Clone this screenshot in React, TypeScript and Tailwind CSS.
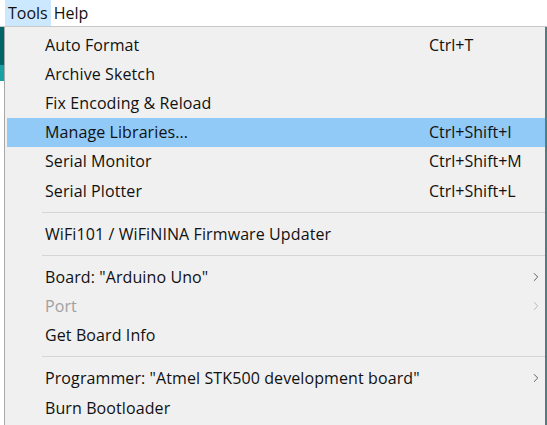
import { ChevronRight } from 'lucide-react'

type Item = { label: string; shortcut?: string; sub?: boolean; disabled?: boolean; active?: boolean }

const groups: Item[][] = [
  [
    { label: 'Auto Format', shortcut: 'Ctrl+T' },
    { label: 'Archive Sketch' },
    { label: 'Fix Encoding & Reload' },
    { label: 'Manage Libraries...', shortcut: 'Ctrl+Shift+I', active: true },
    { label: 'Serial Monitor', shortcut: 'Ctrl+Shift+M' },
    { label: 'Serial Plotter', shortcut: 'Ctrl+Shift+L' },
  ],
  [{ label: 'WiFi101 / WiFiNINA Firmware Updater' }],
  [
    { label: 'Board: "Arduino Uno"', sub: true },
    { label: 'Port', sub: true, disabled: true },
    { label: 'Get Board Info' },
  ],
  [
    { label: 'Programmer: "Atmel STK500 development board"', sub: true },
    { label: 'Burn Bootloader' },
  ],
]

function Row({ item }: { item: Item }) {
  return (
    <div
      className={`flex items-center h-[29.2px] pl-[38px] pr-[2px] ${item.active ? 'bg-[#91c9f7]' : ''} ${item.disabled ? 'text-[#a0a0a0]' : 'text-[#111]'}`}
    >
      <span className="flex-1 whitespace-nowrap tracking-[0.1px]">{item.label}</span>
      {item.shortcut && <span className="w-[114px] whitespace-nowrap">{item.shortcut}</span>}
      {item.sub && (
        <ChevronRight size={14} strokeWidth={1.6} className={item.disabled ? 'text-[#b5b5b5]' : 'text-[#555]'} />
      )}
    </div>
  )
}

export default function App() {
  return (
    <div className="w-[547px] h-[425px] bg-white overflow-hidden relative text-[16px]" style={{ fontFamily: '"Open Sans", "Noto Sans", sans-serif' }}>
      {/* Menu bar */}
      <div className="flex h-[27px] border-b border-[#c9c9c9] items-stretch pl-[5px]">
        <div className="bg-[#cce8ff] px-[3px] flex items-center text-[#111]">Tools</div>
        <div className="px-[3px] flex items-center text-[#111]">Help</div>
      </div>

      <div className="flex h-[398px]">
        {/* editor sliver behind the menu */}
        <div className="w-[4px] flex flex-col">
          <div className="h-[38px] bg-[#006468]" />
          <div className="h-[16px] bg-[#17a1a5]" />
          <div className="flex-1 bg-white" />
        </div>

        {/* dropdown */}
        <div className="w-[541px] bg-[#f0f0f0] border-l border-[#a8a8a8] pt-[3px] pl-[2px]">
          {groups.map((g, gi) => (
            <div key={gi}>
              {gi > 0 && (
                <div className="h-[14px] flex items-center pl-[35px]">
                  <div className="h-px w-full bg-[#d5d5d5]" />
                </div>
              )}
              {g.map((item) => (
                <Row key={item.label} item={item} />
              ))}
            </div>
          ))}
        </div>
        <div className="w-[2px] bg-[#4d7f80]" />
      </div>
    </div>
  )
}
